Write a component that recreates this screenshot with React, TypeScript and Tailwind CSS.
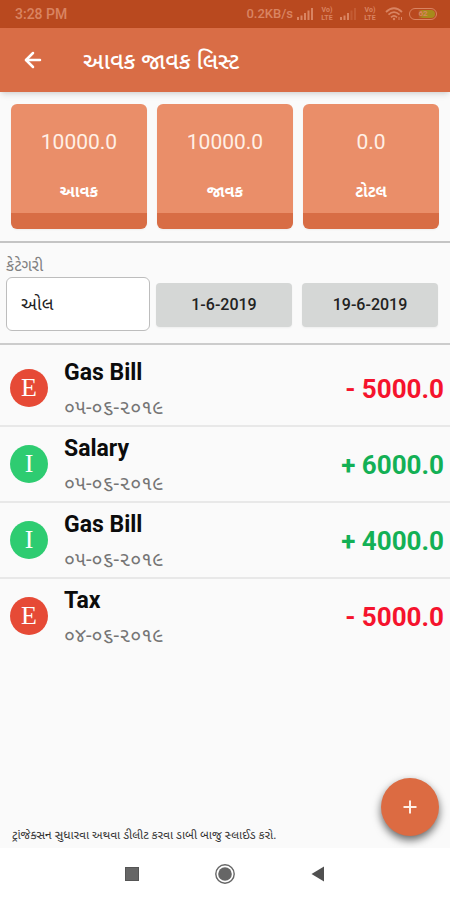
import { ArrowLeft } from "lucide-react";

interface Total {
  label: string;
  value: string;
}

interface Transaction {
  kind: "income" | "expense";
  title: string;
  date: string;
  amount: string;
}

const totals: Total[] = [
  { label: "આવક", value: "10000.0" },
  { label: "જાવક", value: "10000.0" },
  { label: "ટોટલ", value: "0.0" },
];

const transactions: Transaction[] = [
  { kind: "expense", title: "Gas Bill", date: "૦૫-૦૬-૨૦૧૯", amount: "5000.0" },
  { kind: "income", title: "Salary", date: "૦૫-૦૬-૨૦૧૯", amount: "6000.0" },
  { kind: "income", title: "Gas Bill", date: "૦૫-૦૬-૨૦૧૯", amount: "4000.0" },
  { kind: "expense", title: "Tax", date: "૦૪-૦૬-૨૦૧૯", amount: "5000.0" },
];

function Signal({ weak = false }: { weak?: boolean }) {
  return (
    <svg viewBox="0 0 17 12" className="w-[17px] h-3" fill="currentColor" aria-hidden="true">
      <rect x="0" y="9" width="2" height="3" />
      <rect x="3.5" y="7.5" width="2" height="4.5" />
      <rect x="7" y="5" width="2" height="7" />
      <rect x="10.5" y="2.5" width="2" height="9.5" opacity={weak ? 0.3 : 1} />
      <rect x="14" y="0" width="2" height="12" opacity={weak ? 0.3 : 1} />
    </svg>
  );
}

function Volte() {
  return (
    <span className="w-[14px] flex flex-col items-center text-[7px] leading-[8px] font-bold">
      <span>Vo)</span>
      <span>LTE</span>
    </span>
  );
}

function StatusBar() {
  return (
    <div className="h-7 pl-[15px] pr-[13px] flex items-center justify-between bg-[#b9491f] text-[#d98462]">
      <span className="text-sm font-medium">3:28 PM</span>
      <div className="flex items-center">
        <span className="text-[13px] font-medium mr-1">0.2KB/s</span>
        <Signal />
        <span className="mx-1.5 flex">
          <Volte />
        </span>
        <Signal weak />
        <span className="ml-1.5 mr-2 flex">
          <Volte />
        </span>
        <svg viewBox="0 0 18 14" className="w-[18px] h-[14px] mr-1.5" fill="none" stroke="currentColor" strokeWidth="1.8" aria-hidden="true">
          <path d="M1 5 Q9 -2.5 17 5" />
          <path d="M3.5 7.7 Q9 2.5 14.5 7.7" />
          <path d="M6 10.3 Q9 7.5 12 10.3" />
          <circle cx="9" cy="12" r="1.2" fill="currentColor" stroke="none" />
          <path d="M14 10v3M16.500 10v3" strokeWidth="1" />
        </svg>
        <span className="w-7 h-3 p-px rounded-full border border-current flex">
          <span className="flex-1 rounded-full bg-linear-to-r from-[#b9491f] from-30% to-[#a68a1c] to-50% text-[8px] leading-[8px] font-bold text-center">
            62
          </span>
        </span>
      </div>
    </div>
  );
}

function TotalCard({ label, value }: Total) {
  return (
    <div className="flex-1 h-[125px] rounded-md overflow-hidden flex flex-col text-center text-white bg-[#ea8e69] border-b-16 border-[#d86d45] shadow-xs">
      <span className="mt-6 text-[21px] leading-7 text-[#fff0e6]">{value}</span>
      <span className="mt-5 text-base leading-8 font-bold">{label}</span>
    </div>
  );
}

function TransactionRow({ kind, title, date, amount }: Transaction) {
  const income = kind === "income";
  return (
    <li className="h-[76px] pl-2.5 pr-1.5 flex items-center border-b-2 border-[#e8e8e8] last:border-transparent">
      <span
        className={`size-[38px] rounded-full flex items-center justify-center font-['Liberation_Serif',serif] text-[26px] leading-none text-white ${
          income ? "bg-[#2ecc71]" : "bg-[#e64a36]"
        }`}
      >
        {income ? "I" : "E"}
      </span>
      <div className="ml-4 pt-1 flex-1">
        <p className="text-[23px] leading-7 font-bold text-[#0c0c0c]">{title}</p>
        <p className="mt-1.5 text-xl leading-7 text-[#757575]">{date}</p>
      </div>
      <span className={`mt-0.5 text-[26px] leading-8 font-bold ${income ? "text-[#13b055]" : "text-[#f5132d]"}`}>
        {income ? "+" : "-"} {amount}
      </span>
    </li>
  );
}

export default function App() {
  return (
    <div className="min-h-screen flex flex-col bg-[#fafafa] font-[Roboto,'Noto_Sans_Gujarati','Noto_Sans',sans-serif]">
      <StatusBar />
      <header className="h-16 pl-[19px] flex items-center gap-9 bg-[#d96d46] text-white shadow-md">
        <button type="button" aria-label="Back" className="p-0.5">
          <ArrowLeft className="size-6" strokeWidth={2.5} />
        </button>
        <h1 className="pt-1 text-[23px] leading-8 font-medium">આવક જાવક લિસ્ટ</h1>
      </header>

      <main className="flex-1 flex flex-col">
        <section className="px-[11px] py-3 flex gap-2.5 border-b-2 border-[#c4c4c4]">
          {totals.map((t) => (
            <TotalCard key={t.label} {...t} />
          ))}
        </section>

        <section className="h-[102px] pl-1.5 pr-3 pt-3 pb-3 flex items-end border-b-2 border-[#cccccc]">
          <div className="w-1/3 flex flex-col">
            <label htmlFor="category" className="text-base leading-[22px] text-[#808080]">
              કેટેગરી
            </label>
            <select
              id="category"
              className="h-[54px] px-3.5 appearance-none rounded-md border border-[#bdbdbd] bg-white text-lg text-[#222222]"
            >
              <option>ઓલ</option>
            </select>
          </div>
          <button type="button" className="ml-1.5 mb-1 h-11 flex-1 rounded-sm bg-[#d5d7d6] text-base font-medium text-[#222222] shadow-xs">
            1-6-2019
          </button>
          <button type="button" className="ml-2.5 mb-1 h-11 flex-1 rounded-sm bg-[#d5d7d6] text-base font-medium text-[#222222] shadow-xs">
            19-6-2019
          </button>
        </section>

        <ul className="pt-1.5">
          {transactions.map((t, i) => (
            <TransactionRow key={i} {...t} />
          ))}
        </ul>

        <footer className="mt-auto pl-3 pr-[11px] pb-1 flex items-end justify-between">
          <p className="text-xs leading-[18px] text-[#333333]">
            ટ્રાંજેક્સન સુધારવા અથવા ડીલીટ કરવા ડાબી બાજુ સ્લાઈડ કરો.
          </p>
          <button
            type="button"
            aria-label="Add transaction"
            className="size-[58px] mb-2 shrink-0 rounded-full flex items-center justify-center bg-[#dc6b42] text-[#fff0e6] shadow-[0_4px_8px_rgba(0,0,0,0.6)]"
          >
            <svg viewBox="0 0 14 14" className="size-3.5" stroke="currentColor" strokeWidth="2" aria-hidden="true">
              <path d="M7 0.500v13M0.500 7h13" />
            </svg>
          </button>
        </footer>
      </main>

      <nav className="h-[52px] flex items-center justify-center gap-[73px] bg-white text-[#666666]">
        <button type="button" aria-label="Recent apps" className="size-5 flex items-center justify-center">
          <span className="size-[14px] bg-current border border-[#555555]" />
        </button>
        <button type="button" aria-label="Home" className="size-5">
          <svg viewBox="0 0 20 20" className="size-5" aria-hidden="true">
            <circle cx="10" cy="10" r="9.200" fill="none" stroke="currentColor" strokeWidth="1.4" />
            <circle cx="10" cy="10" r="6.800" fill="currentColor" />
          </svg>
        </button>
        <button type="button" aria-label="Back" className="size-5 flex items-center justify-center text-[#505050]">
          <svg viewBox="0 0 14 16" className="w-[14px] h-4" fill="currentColor" aria-hidden="true">
            <path d="M13 0.500v15L0.500 8z" />
          </svg>
        </button>
      </nav>
    </div>
  );
}
